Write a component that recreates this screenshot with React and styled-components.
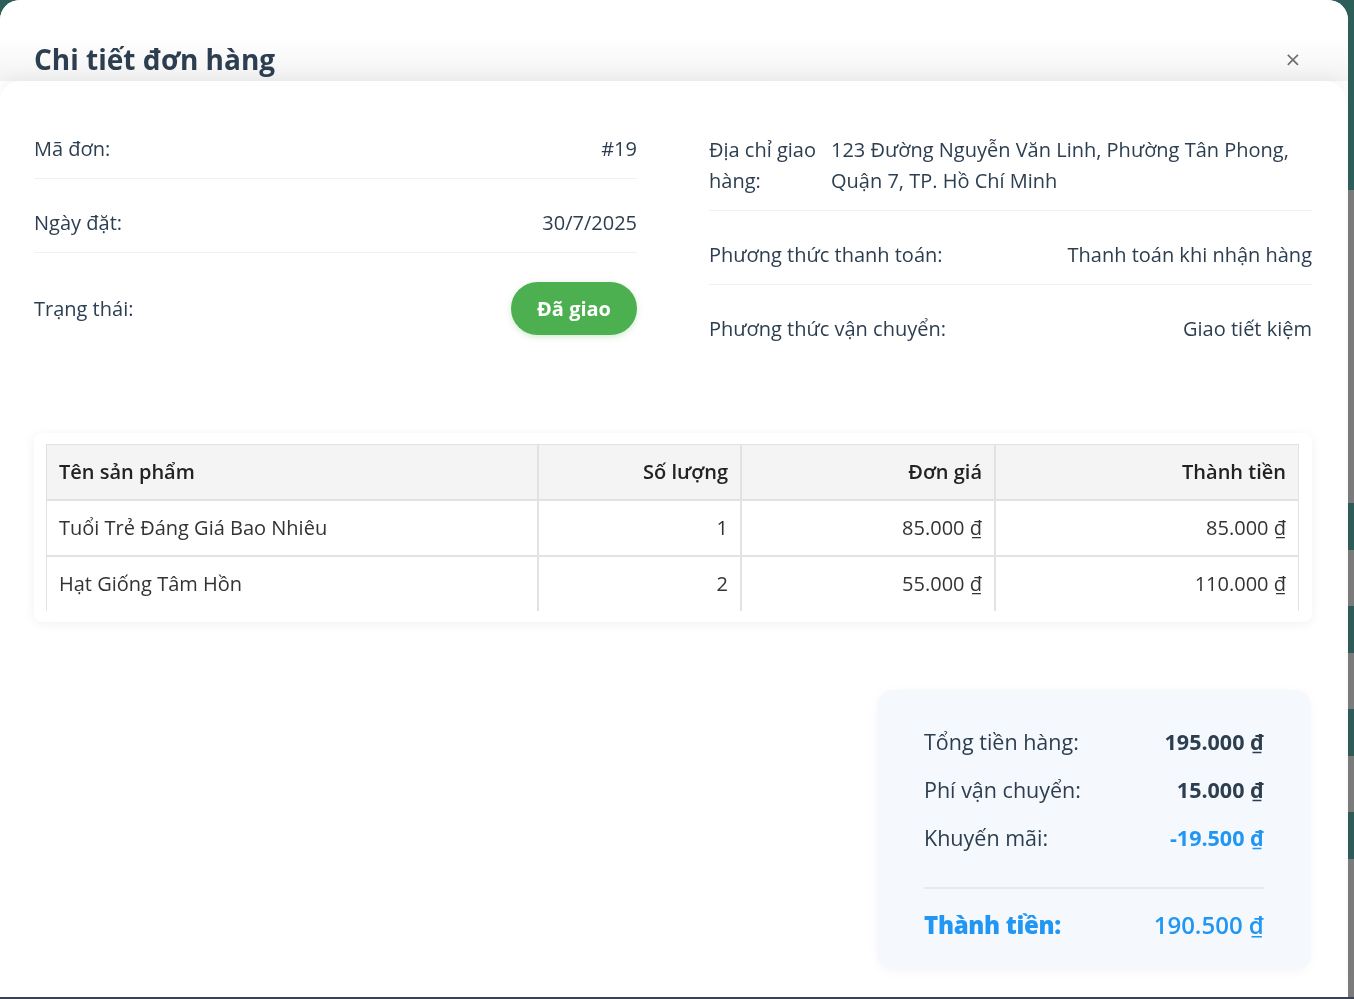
import React from "react";
import styled, { createGlobalStyle } from "styled-components";

const GlobalStyle = createGlobalStyle`
  html, body { margin: 0; padding: 0; }
  body {
    background: #3a4154;
    font-family: "Open Sans", "Noto Sans", sans-serif;
    color: #2c3e50;
    overflow: hidden;
  }
  * { box-sizing: border-box; }
`;

/* ---------- background page (mostly hidden behind the modal) ---------- */
const Backdrop = styled.div`
  height: 997px;
  display: flex;
  flex-direction: column;
  background: #7b7b7b;
`;
const BackdropHeader = styled.div`
  height: 190px;
  background: #2d5e5a;
`;
const BackdropList = styled.div`
  display: flex;
  flex-direction: column;
  padding-top: 313px;
`;
const BackdropRow = styled.div`
  height: 103px;
  display: flex;
  justify-content: flex-end;
  align-items: flex-start;
`;
const BackdropAction = styled.div`
  width: 60px;
  height: 47px;
  background: #2e5b58;
`;

/* ---------- modal ---------- */
const Overlay = styled.div`
  position: fixed;
  top: 0;
  left: 0;
  width: 1348px;
  height: 997px;
`;
const Modal = styled.div`
  width: 100%;
  height: 100%;
  background: #fff;
  border-radius: 20px 20px 0 0;
  display: flex;
  flex-direction: column;
  overflow: hidden;
`;
const Header = styled.div`
  height: 81px;
  flex-shrink: 0;
  display: flex;
  justify-content: space-between;
  align-items: flex-start;
  padding: 38px 43px 0 34px;
  background: linear-gradient(180deg, #ffffff 45%, #f3f3f3 100%);
`;
const Title = styled.h2`
  margin: 0;
  font-size: 28px;
  line-height: 42px;
  font-weight: 700;
  color: #2c3e50;
`;
const CloseButton = styled.button`
  width: 24px;
  height: 42px;
  border: none;
  background: transparent;
  padding: 0;
  font-family: "DejaVu Sans", sans-serif;
  font-size: 20px;
  line-height: 42px;
  color: #6f6f6f;
  cursor: pointer;
`;
const Body = styled.div`
  flex: 1;
  margin-right: 2px;
  background: #fff;
  border-radius: 20px 20px 0 0;
  box-shadow: 0 -5px 14px rgba(0, 0, 0, 0.045);
  padding: 39px 34px 0 34px;
`;

const InfoGrid = styled.div`
  display: grid;
  grid-template-columns: 1fr 1fr;
  column-gap: 72px;
  align-items: start;
`;
const InfoColumn = styled.div`
  display: flex;
  flex-direction: column;
`;
const InfoRow = styled.div`
  display: flex;
  justify-content: space-between;
  align-items: ${(p) => (p.$top ? "flex-start" : "center")};
  padding: 14px 0;
  margin-bottom: 15px;
  border-bottom: 1px solid #f0f0f0;
  font-size: 20px;
  line-height: 30px;
  &:last-child {
    border-bottom: none;
    margin-bottom: 0;
  }
`;
const Label = styled.span`
  color: #2c3e50;
  ${(p) => (p.$width ? `width: ${p.$width}px; flex-shrink: 0;` : "")}
  line-height: ${(p) => (p.$width ? "31px" : "30px")};
`;
const Value = styled.span`
  color: #2c3e50;
  text-align: ${(p) => (p.$left ? "left" : "right")};
  ${(p) => (p.$left ? "flex: 1; margin-left: 4px; line-height: 31px;" : "")}
`;
const StatusBadge = styled.span`
  display: inline-block;
  padding: 12px 26px;
  border-radius: 999px;
  background: #4caf50;
  color: #fff;
  font-weight: 700;
  font-size: 20px;
  line-height: 29px;
  box-shadow: 0 2px 6px rgba(76, 175, 80, 0.25);
`;

const TableCard = styled.div`
  margin-top: 75px;
  background: #fff;
  border-radius: 8px;
  padding: 11px 13px 11px 12px;
  box-shadow: 0 2px 12px rgba(0, 0, 0, 0.06);
`;
const Table = styled.table`
  width: 100%;
  border-collapse: separate;
  border-spacing: 0;
  table-layout: fixed;
  font-size: 20px;
  line-height: 30px;
`;
const Th = styled.th`
  background: #f4f4f4;
  border: 1px solid #e2e2e2;
  padding: 12px 12px;
  font-weight: 600;
  color: #222;
  text-align: ${(p) => p.$align || "left"};
`;
const Td = styled.td`
  border: 1px solid #e2e2e2;
  padding: 12px 12px;
  color: #333;
  text-align: ${(p) => p.$align || "left"};
  tr:last-child > & {
    border-bottom: none;
  }
`;

const SummaryWrap = styled.div`
  display: flex;
  justify-content: flex-end;
  margin-top: 68px;
`;
const SummaryBox = styled.div`
  width: 434px;
  margin-right: 1px;
  background: #f5f8fc;
  border-radius: 16px;
  box-shadow: 0 2px 12px rgba(0, 0, 0, 0.035);
  padding: 36px 47px 27px;
`;
const SummaryRow = styled.div`
  display: flex;
  justify-content: space-between;
  align-items: center;
  font-size: 21.5px;
  line-height: 32px;
  margin-bottom: 16px;
  &:nth-last-child(2) {
    margin-bottom: 0;
  }
`;
const SummaryLabel = styled.span`
  color: #2c3e50;
`;
const SummaryValue = styled.span`
  font-weight: 700;
  color: ${(p) => (p.$blue ? "#2196f3" : "#2c3e50")};
`;
const TotalRow = styled.div`
  display: flex;
  justify-content: space-between;
  align-items: center;
  margin-top: 33px;
  padding-top: 18px;
  border-top: 2px solid #e6e9ee;
  font-size: 24px;
  line-height: 36px;
  color: #2196f3;
`;
const TotalLabel = styled.span`
  font-weight: 800;
  letter-spacing: -0.3px;
`;
const TotalValue = styled.span`
  font-weight: 600;
`;

const items = [
  { name: "Tuổi Trẻ Đáng Giá Bao Nhiêu", qty: 1, price: "85.000 ₫", total: "85.000 ₫" },
  { name: "Hạt Giống Tâm Hồn", qty: 2, price: "55.000 ₫", total: "110.000 ₫" },
];

export default function App() {
  return (
    <>
      <GlobalStyle />
      <Backdrop>
        <BackdropHeader />
        <BackdropList>
          {[0, 1, 2, 3].map((i) => (
            <BackdropRow key={i}>
              <BackdropAction />
            </BackdropRow>
          ))}
        </BackdropList>
      </Backdrop>
      <Overlay>
        <Modal>
          <Header>
            <Title>Chi tiết đơn hàng</Title>
            <CloseButton aria-label="Đóng">×</CloseButton>
          </Header>
          <Body>
            <InfoGrid>
              <InfoColumn>
                <InfoRow>
                  <Label>Mã đơn:</Label>
                  <Value>#19</Value>
                </InfoRow>
                <InfoRow>
                  <Label>Ngày đặt:</Label>
                  <Value>30/7/2025</Value>
                </InfoRow>
                <InfoRow>
                  <Label>Trạng thái:</Label>
                  <StatusBadge>Đã giao</StatusBadge>
                </InfoRow>
              </InfoColumn>
              <InfoColumn>
                <InfoRow $top>
                  <Label $width={118}>Địa chỉ giao hàng:</Label>
                  <Value $left>
                    123 Đường Nguyễn Văn Linh, Phường Tân Phong, Quận 7, TP. Hồ Chí Minh
                  </Value>
                </InfoRow>
                <InfoRow>
                  <Label>Phương thức thanh toán:</Label>
                  <Value>Thanh toán khi nhận hàng</Value>
                </InfoRow>
                <InfoRow>
                  <Label>Phương thức vận chuyển:</Label>
                  <Value>Giao tiết kiệm</Value>
                </InfoRow>
              </InfoColumn>
            </InfoGrid>

            <TableCard>
              <Table>
                <colgroup>
                  <col style={{ width: 492 }} />
                  <col style={{ width: 203 }} />
                  <col style={{ width: 254 }} />
                  <col style={{ width: 304 }} />
                </colgroup>
                <thead>
                  <tr>
                    <Th>Tên sản phẩm</Th>
                    <Th $align="right">Số lượng</Th>
                    <Th $align="right">Đơn giá</Th>
                    <Th $align="right">Thành tiền</Th>
                  </tr>
                </thead>
                <tbody>
                  {items.map((it) => (
                    <tr key={it.name}>
                      <Td>{it.name}</Td>
                      <Td $align="right">{it.qty}</Td>
                      <Td $align="right">{it.price}</Td>
                      <Td $align="right">{it.total}</Td>
                    </tr>
                  ))}
                </tbody>
              </Table>
            </TableCard>

            <SummaryWrap>
              <SummaryBox>
                <SummaryRow>
                  <SummaryLabel>Tổng tiền hàng:</SummaryLabel>
                  <SummaryValue>195.000 ₫</SummaryValue>
                </SummaryRow>
                <SummaryRow>
                  <SummaryLabel>Phí vận chuyển:</SummaryLabel>
                  <SummaryValue>15.000 ₫</SummaryValue>
                </SummaryRow>
                <SummaryRow>
                  <SummaryLabel>Khuyến mãi:</SummaryLabel>
                  <SummaryValue $blue>-19.500 ₫</SummaryValue>
                </SummaryRow>
                <TotalRow>
                  <TotalLabel>Thành tiền:</TotalLabel>
                  <TotalValue>190.500 ₫</TotalValue>
                </TotalRow>
              </SummaryBox>
            </SummaryWrap>
          </Body>
        </Modal>
      </Overlay>
    </>
  );
}
